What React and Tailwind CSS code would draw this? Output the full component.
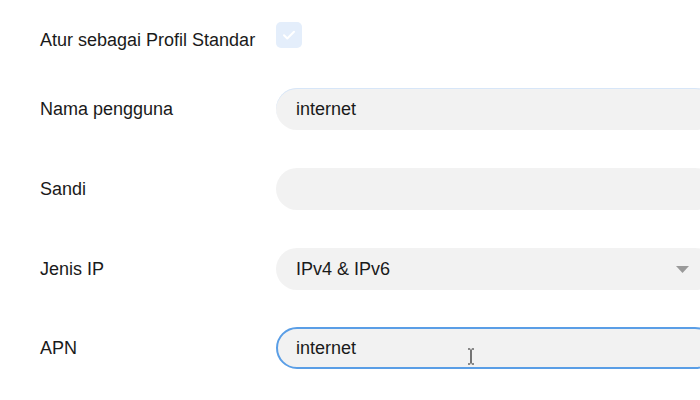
import { useState } from "react";

function Field({ children, focused, hint, className = "" }) {
  return (
    <div
      className={[
        "relative h-[42px] w-[440px] shrink-0 rounded-full bg-[#f2f2f2] flex items-center",
        focused ? "border-2 border-[#5a9ee6] pl-[18px]" : "pl-[20px]",
        hint ? "shadow-[inset_0_1px_0_#d7e6f8]" : "",
        className,
      ].join(" ")}
    >
      {children}
    </div>
  );
}

function Row({ label, children, className = "" }) {
  return (
    <div className={`flex items-center h-[42px] ${className}`}>
      <div className="w-[236px] shrink-0">{label}</div>
      {children}
    </div>
  );
}

export default function App() {
  const [isDefault, setIsDefault] = useState(false);

  return (
    <main
      className="h-[400px] w-[700px] overflow-hidden bg-white pl-[40px] pt-[19px] text-[18px] text-[#1a1a1a]"
      style={{ fontFamily: '"Liberation Sans", Arial, sans-serif' }}
    >
      <Row label="Atur sebagai Profil Standar">
        <button
          type="button"
          onClick={() => setIsDefault(!isDefault)}
          className="-mt-[10px] flex h-[26px] w-[26px] items-center justify-center rounded-[5px] bg-[#e4eefb]"
        >
          <svg width="16" height="16" viewBox="0 0 16 16" fill="none">
            <path
              d="M3 8.3l3.3 3.2L13 4.8"
              stroke="#ffffff"
              strokeWidth="2"
              strokeLinecap="round"
              strokeLinejoin="round"
            />
          </svg>
        </button>
      </Row>

      <Row label="Nama pengguna" className="mt-[27px]">
        <Field hint>internet</Field>
      </Row>

      <Row label="Sandi" className="mt-[38px]">
        <Field />
      </Row>

      <Row label="Jenis IP" className="mt-[38px]">
        <Field>
          IPv4 &amp; IPv6
          <svg
            className="absolute right-[27px] top-[18px]"
            width="13"
            height="7"
            viewBox="0 0 13 7"
          >
            <path d="M0 0h13L6.5 7z" fill="#9a9a9a" />
          </svg>
        </Field>
      </Row>

      <Row label="APN" className="mt-[37px]">
        <Field focused>
          internet
          <svg
            className="absolute left-[189px] top-[19px]"
            width="8"
            height="17"
            viewBox="0 0 8 17"
            fill="none"
          >
            <path
              d="M1 1h2.2M4.8 1H7M4 1.5v14M1 16h2.2M4.8 16H7"
              stroke="#222"
              strokeWidth="1.2"
            />
          </svg>
        </Field>
      </Row>
    </main>
  );
}
